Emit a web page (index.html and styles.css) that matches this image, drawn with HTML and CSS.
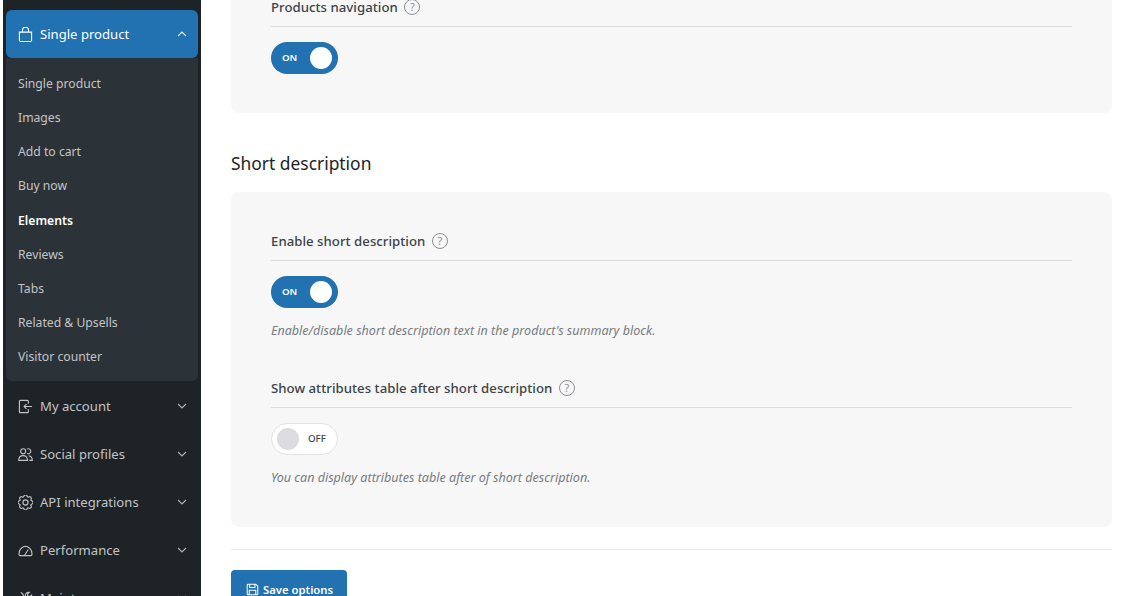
FILE: index.html
```html
<!DOCTYPE html>
<html lang="en">
<head>
<meta charset="utf-8">
<title>Theme options</title>
<link rel="stylesheet" href="styles.css">
</head>
<body>
<div class="app">
  <nav class="sidebar">
    <div class="nav-item active">
      <svg class="nav-icon" viewBox="0 0 16 16"><path d="M1.500 5.500h13V14a1.500 1.500 0 0 1-1.500 1.500H3A1.500 1.500 0 0 1 1.500 14zM4.750 5.500V3.500a3.250 3.250 0 0 1 6.500 0v2"/></svg>
      <span class="nav-label">Single product</span>
      <svg class="chev" viewBox="0 0 10 10"><path d="M1 7l4-4 4 4"/></svg>
    </div>
    <ul class="submenu">
      <li>Single product</li>
      <li>Images</li>
      <li>Add to cart</li>
      <li>Buy now</li>
      <li class="current">Elements</li>
      <li>Reviews</li>
      <li>Tabs</li>
      <li>Related &amp; Upsells</li>
      <li>Visitor counter</li>
    </ul>
    <div class="nav-item first-closed">
      <svg class="nav-icon" viewBox="0 0 16 16"><path d="M11 5V2.500a1 1 0 0 0-1-1H2.500a1 1 0 0 0-1 1v11a1 1 0 0 0 1 1H10a1 1 0 0 0 1-1V11M15 8H6.500M9 5.500L6.500 8 9 10.500"/></svg>
      <span class="nav-label">My account</span>
      <svg class="chev" viewBox="0 0 10 10"><path d="M1 3l4 4 4-4"/></svg>
    </div>
    <div class="nav-item">
      <svg class="nav-icon" viewBox="0 0 16 16"><path d="M.8 14.200c0-3 1.800-5 4.700-5s4.700 2 4.700 5zM12 14.200h3.200c0-2.600-1.400-4.500-3.900-4.800"/><circle cx="5.500" cy="4.500" r="2.700"/><path d="M9.800 2.100a2.700 2.700 0 1 1 0 4.900"/></svg>
      <span class="nav-label">Social profiles</span>
      <svg class="chev" viewBox="0 0 10 10"><path d="M1 3l4 4 4-4"/></svg>
    </div>
    <div class="nav-item">
      <svg class="nav-icon" viewBox="0 0 16 16"><circle cx="8" cy="8" r="2.750"/><path d="M9.796 1.343c-.527-1.790-3.065-1.790-3.592 0l-.094.319a.873.873 0 0 1-1.255.520l-.292-.160c-1.640-.892-3.433.902-2.540 2.541l.159.292a.873.873 0 0 1-.520 1.255l-.319.094c-1.790.527-1.790 3.065 0 3.592l.319.094a.873.873 0 0 1 .520 1.255l-.160.292c-.892 1.640.901 3.434 2.541 2.540l.292-.159a.873.873 0 0 1 1.255.520l.094.319c.527 1.790 3.065 1.790 3.592 0l.094-.319a.873.873 0 0 1 1.255-.520l.292.160c1.640.893 3.434-.902 2.540-2.541l-.159-.292a.873.873 0 0 1 .520-1.255l.319-.094c1.790-.527 1.790-3.065 0-3.592l-.319-.094a.873.873 0 0 1-.520-1.255l.160-.292c.893-1.640-.902-3.433-2.541-2.540l-.292.159a.873.873 0 0 1-1.255-.520z"/></svg>
      <span class="nav-label">API integrations</span>
      <svg class="chev" viewBox="0 0 10 10"><path d="M1 3l4 4 4-4"/></svg>
    </div>
    <div class="nav-item">
      <svg class="nav-icon" viewBox="0 0 16 16"><path d="M2.500 13.500h11a1.500 1.500 0 0 0 1.300-2.200A7.600 7.600 0 0 0 8 3.500a7.600 7.600 0 0 0-6.800 7.800 1.500 1.500 0 0 0 1.300 2.200zM7 13l4-6"/></svg>
      <span class="nav-label">Performance</span>
      <svg class="chev" viewBox="0 0 10 10"><path d="M1 3l4 4 4-4"/></svg>
    </div>
    <div class="nav-item">
      <svg class="nav-icon" viewBox="0 0 16 16"><path d="M3 1.500l2.500 2v2l3 3M14.500 4.500a3.500 3.500 0 0 1-4.800 3.200L4 13.500a1.500 1.500 0 0 1-2-2l5.800-5.700A3.500 3.500 0 0 1 12 1.500L10 3.500l.5 2 2 .5z"/></svg>
      <span class="nav-label">Maintenance</span>
      <svg class="chev" viewBox="0 0 10 10"><path d="M1 3l4 4 4-4"/></svg>
    </div>
  </nav>

  <main class="content">
    <section class="card card-top">
      <div class="field">
        <div class="field-label">Products navigation <span class="help">?</span></div>
        <div class="toggle on"><span class="toggle-text">ON</span><span class="knob"></span></div>
      </div>
    </section>

    <h3 class="section-title">Short description</h3>

    <section class="card">
      <div class="field">
        <div class="field-label">Enable short description <span class="help">?</span></div>
        <div class="toggle on"><span class="toggle-text">ON</span><span class="knob"></span></div>
        <p class="desc">Enable/disable short description text in the product's summary block.</p>
      </div>
      <div class="field">
        <div class="field-label">Show attributes table after short description <span class="help">?</span></div>
        <div class="toggle off"><span class="knob"></span><span class="toggle-text">OFF</span></div>
        <p class="desc">You can display attributes table after of short description.</p>
      </div>
    </section>

    <hr class="rule">

    <button class="save" type="button">
      <svg class="save-icon" viewBox="0 0 16 16"><path d="M1.500 2.500a1 1 0 0 1 1-1h9.500l2.500 2.500v9.500a1 1 0 0 1-1 1h-11a1 1 0 0 1-1-1zM4.500 1.500v4h6.500v-4M4 14.500V9h8v5.500"/></svg>
      <span>Save options</span>
    </button>
  </main>
</div>
</body>
</html>
```
FILE: styles.css
```css
* { box-sizing: border-box; }
html, body { margin: 0; padding: 0; background: #fff; height: 100%; overflow: hidden; }
body { font-family: "Noto Sans", "Open Sans", "Liberation Sans", sans-serif; color: #3c434a; }

.app { display: flex; height: 596px; overflow: hidden; align-items: flex-start; }

.sidebar {
  flex: 0 0 198px;
  margin-left: 3px;
  height: 596px;
  padding: 10px 3px 0;
  background: #1d2327;
  overflow: hidden;
}
.nav-item {
  display: flex;
  align-items: center;
  height: 48px;
  padding: 0 11px 0 12px;
  font-size: 13.100px;
  color: #c3c4c7;
}
.nav-item.active { background: #2271b1; color: #fff; border-radius: 6px; }
.nav-item.first-closed { margin-top: 1px; }
.nav-icon {
  flex: none;
  width: 15px;
  height: 15px;
  margin-right: 7px;
  fill: none;
  stroke: currentColor;
  stroke-width: 1.200;
}
.nav-label { flex: 1; white-space: nowrap; }
.chev { flex: none; width: 10px; height: 10px; fill: none; stroke: currentColor; stroke-width: 1.100; opacity: .9; }

.submenu {
  list-style: none;
  margin: 0;
  padding: 9px 12px 7px;
  background: #2c3338;
  border-radius: 0 0 6px 6px;
  font-size: 12.200px;
  color: #c3c4c7;
}
.submenu li { height: 34.125px; line-height: 34.125px; white-space: nowrap; }
.submenu .current { color: #fff; font-weight: 600; }

.content {
  flex: none;
  width: 881px;
  margin-left: 30px;
  margin-top: -42px;
}
.card {
  background: #f7f7f7;
  border-radius: 8px;
  padding: 40px 40px 39px;
}
.field-label {
  display: flex;
  align-items: center;
  gap: 6.500px;
  height: 29px;
  padding-bottom: 11px;
  border-bottom: 1px solid #dcdcde;
  font-size: 13.200px;
  font-weight: 500;
  letter-spacing: .03px;
  color: #3c434a;
  margin-bottom: 15px;
  white-space: nowrap;
}
.help {
  display: inline-flex;
  align-items: center;
  justify-content: center;
  width: 16px;
  height: 16px;
  border: 1px solid #8c8f94;
  border-radius: 50%;
  font-size: 11px;
  font-weight: 400;
  color: #8c8f94;
  letter-spacing: 0;
}
.toggle {
  display: flex;
  align-items: center;
  width: 67px;
  height: 32px;
  border-radius: 16px;
  font-size: 9.700px;
  font-weight: 600;
}
.toggle-text { padding-bottom: 2px; }
.toggle.on { background: #2271b1; color: #fff; padding: 0 6px 0 11px; justify-content: space-between; }
.toggle.on .knob { background: #fff; }
.toggle.off { background: #fff; border: 1px solid #e2e2e4; padding: 0 5px; color: #3c434a; gap: 9px; font-weight: 500; }
.toggle.off .knob { background: #dcdcde; }
.knob { width: 22px; height: 22px; border-radius: 50%; flex: none; }

.desc {
  margin: 13px 0 0;
  font-size: 12.550px;
  line-height: 20px;
  font-style: italic;
  color: #787c82;
  white-space: nowrap;
}
.field + .field { margin-top: 38px; }

.section-title {
  margin: 38px 0 17px;
  font-size: 17.400px;
  line-height: 24px;
  font-weight: 400;
  color: #1d2327;
}
.rule { border: 0; border-top: 1px solid #e8e8e9; margin: 22px 0 20px; }
.save {
  display: flex;
  align-items: center;
  gap: 4px;
  width: 116px;
  height: 38px;
  padding: 0 0 0 15px;
  background: #2271b1;
  border: 0;
  border-radius: 4px;
  color: #fff;
  font: 600 11.300px "Noto Sans", "Open Sans", sans-serif;
  white-space: nowrap;
}
.save-icon { flex: none; width: 13px; height: 13px; fill: none; stroke: #fff; stroke-width: 1.300; }
```
